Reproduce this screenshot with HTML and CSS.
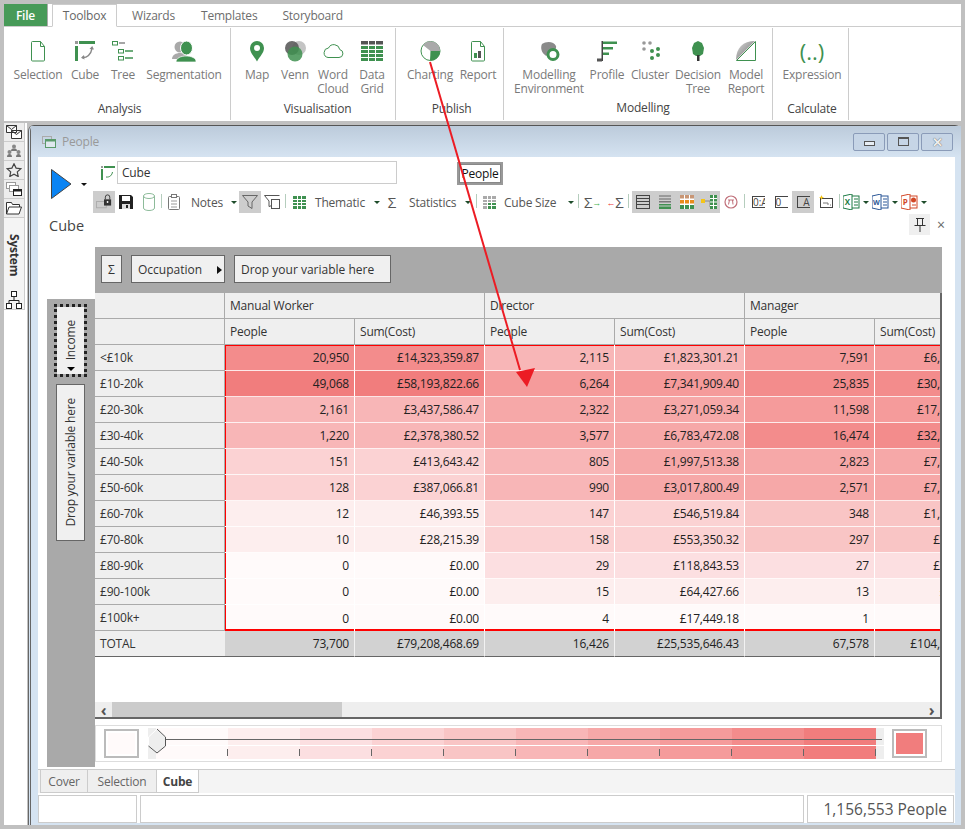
FILE: index.html
```html
<!DOCTYPE html>
<html lang="en">
<head>
<meta charset="utf-8">
<title>People - Cube</title>
<link rel="stylesheet" href="styles.css">
</head>
<body>
<div class="app">
  <header class="ribbon">
    <nav class="rtabs">
      <span class="rtab file">File</span>
      <span class="rtab active">Toolbox</span>
      <span class="rtab t-wiz">Wizards</span>
      <span class="rtab t-tem">Templates</span>
      <span class="rtab t-sto">Storyboard</span>
    </nav>
    <div class="groups">
      <section class="group g1">
        <div class="btns">
          <div class="rb w58"><svg viewBox="0 0 24 24" class="ri"><path d="M5.5 3.5q0-1 1-1h8l4 5v13.500q0 1-1 1h-11q-1 0-1-1z" class="sg"/><path d="M14.500 2.500v5h4" class="sg"/></svg><span>Selection</span></div>
          <div class="rb w36"><svg viewBox="0 0 24 24" class="ri"><rect x="2" y="2" width="3" height="3" fill="#999"/><rect x="6" y="2" width="16" height="3" class="fg"/><rect x="2" y="7" width="3" height="15" class="fg"/><path d="M9 18.500c5 .5 9-3 10-9" class="sm"/><path d="M16.500 10l2.700-3 1.800 3.500zM11 16l-3 2.700 3.500 1.800z" fill="#888"/></svg><span>Cube</span></div>
          <div class="rb w40"><svg viewBox="0 0 24 24" class="ri"><rect x="1.500" y="2.500" width="5" height="3.500" class="sg"/><path d="M8 4h6" class="sm"/><rect x="7.500" y="10.500" width="5" height="3.500" class="sg"/><path d="M14 12h8M14 19h8" class="sg2"/><rect x="7.500" y="17.500" width="5" height="3.500" class="sg"/></svg><span>Tree</span></div>
          <div class="rb w82"><svg viewBox="0 0 24 24" class="ri"><circle cx="8" cy="8" r="5.500" fill="#a9a9a9"/><path d="M0 20c0-4 4-6 8-6s6 1 7 3l-6 3z" fill="#a9a9a9"/><ellipse cx="14.500" cy="9" rx="6" ry="7" fill="#3f9150" stroke="#fff"/><path d="M4 23c0-4 5-6 10-6s10 2 10 5v1z" fill="#3f9150" stroke="#fff" stroke-width=".7"/></svg><span>Segmentation</span></div>
        </div>
        <h3>Analysis</h3>
      </section>
      <section class="group g2">
        <div class="btns">
          <div class="rb w34"><svg viewBox="0 0 24 24" class="ri"><path d="M12 22.500C9 17 5 14 5 9a7 7 0 0 1 14 0c0 5-4 8-7 13.500z" class="fg"/><circle cx="12" cy="9" r="3" fill="#fff"/></svg><span>Map</span></div>
          <div class="rb w42"><svg viewBox="0 0 24 24" class="ri"><circle cx="16" cy="9" r="7" fill="#c4c4c4"/><circle cx="9" cy="9" r="7" fill="#5c5c5c" opacity=".9"/><circle cx="12" cy="15" r="7.500" fill="#3f9150" opacity=".85"/></svg><span>Venn</span></div>
          <div class="rb w34"><svg viewBox="0 0 24 24" class="ri"><path d="M7 18.500h11a4 4 0 0 0 .8-7.900 6 6 0 0 0-11.300-1.600A4.800 4.800 0 0 0 7 18.500z" class="sg"/></svg><span>Word<br>Cloud</span></div>
          <div class="rb w44"><svg viewBox="0 0 24 24" class="ri"><rect x="1" y="2" width="22" height="3.500" fill="#555"/><rect x="1" y="7" width="22" height="15" class="fg"/><path d="M8.500 2v20M15.500 2v20M1 10.500h22M1 14.500h22M1 18.500h22" stroke="#fff" fill="none"/></svg><span>Data<br>Grid</span></div>
        </div>
        <h3>Visualisation</h3>
      </section>
      <section class="group g3">
        <div class="btns">
          <div class="rb w60"><svg viewBox="0 0 24 24" class="ri"><circle cx="12.500" cy="12" r="9.500" fill="#fff" stroke="#3f9150"/><path d="M12.500 12L5 6a9.500 9.500 0 0 1 17 6z" fill="#aaa"/><path d="M12.500 12h9.500a9.500 9.500 0 0 1-10 9.500z" class="fg"/></svg><span>Charting</span></div>
          <div class="rb w36"><svg viewBox="0 0 24 24" class="ri"><path d="M5.500 3.500q0-1 1-1h8l4 5v13.500q0 1-1 1h-11q-1 0-1-1z" class="sg"/><path d="M14.500 2.500v5h4" class="sg"/><rect x="8" y="14" width="3" height="5" class="fg"/><rect x="12" y="12" width="3" height="7" fill="#555"/></svg><span>Report</span></div>
        </div>
        <h3>Publish</h3>
      </section>
      <section class="group g4">
        <div class="btns">
          <div class="rb w70"><svg viewBox="0 0 24 24" class="ri"><path d="M5 5c4-3 12-3 14 2 1 3-3 6-6 7-2 2-3 4-5 2-3-2-5-7-3-11z" fill="#8a8a8a"/><circle cx="16" cy="15.500" r="5" fill="#fff" stroke="#3f9150" stroke-width="3"/></svg><span>Modelling<br>Environment</span></div>
          <div class="rb w46"><svg viewBox="0 0 24 24" class="ri"><rect x="6.500" y="2" width="1.500" height="20" fill="#444"/><rect x="2" y="19.500" width="5" height="3" fill="#555"/><rect x="8" y="2.500" width="14" height="2.500" class="fg"/><rect x="8" y="8" width="10" height="2.500" class="fg"/><rect x="8" y="13.500" width="6" height="2.500" class="fg"/></svg><span>Profile</span></div>
          <div class="rb w40"><svg viewBox="0 0 24 24" class="ri"><circle cx="6" cy="4" r="1.800" fill="#999"/><circle cx="12" cy="4" r="1.800" fill="#999"/><circle cx="6" cy="10" r="1.800" fill="#999"/><circle cx="14" cy="12" r="2" class="fg"/><circle cx="20" cy="10" r="2" class="fg"/><circle cx="20" cy="16" r="2" class="fg"/><circle cx="14" cy="19" r="2" class="fg"/></svg><span>Cluster</span></div>
          <div class="rb w56"><svg viewBox="0 0 24 24" class="ri"><path d="M12 2l4 2 2 5-1 6-3 2h-4l-3-2-1-6 2-5z" class="fg"/><rect x="11" y="16" width="2.500" height="6" fill="#333"/></svg><span>Decision<br>Tree</span></div>
          <div class="rb w40"><svg viewBox="0 0 24 24" class="ri"><defs><linearGradient id="mg" x1="0" y1="0" x2="1" y2="1"><stop offset="0" stop-color="#ddd"/><stop offset="1" stop-color="#666"/></linearGradient></defs><path d="M2 21C2 9 9 2 21 2z" fill="url(#mg)"/><path d="M2.500 21.500L21.500 2.500v19z" class="sg"/></svg><span>Model<br>Report</span></div>
        </div>
        <h3>Calculate-m</h3>
      </section>
      <section class="group g5">
        <div class="btns">
          <div class="rb w72"><span class="expr">(..)</span><span>Expression</span></div>
        </div>
        <h3>Calculate</h3>
      </section>
    </div>
  </header>

  <main class="main">
    <aside class="side">
      <div class="side-panel">
        <div class="si"><svg viewBox="0 0 16 14" class="sic"><path d="M.5.5h10v7h-10zM.5.500l5 4 5-4M5.500 5.500h10v8h-10zM5.500 5.500l5 4 5-4" fill="#fff" stroke="#333"/></svg></div>
        <div class="si"><svg viewBox="0 0 16 14" class="sic"><circle cx="8" cy="2.500" r="2" fill="#888"/><circle cx="3.500" cy="8" r="2" fill="#888"/><circle cx="12.500" cy="8" r="2" fill="#888"/><path d="M1 13c0-2 1-3 2.500-3S6 11 6 13zM10 13c0-2 1-3 2.500-3s2.500 1 2.500 3zM5 7c0-2 1-2.500 3-2.500S11 5 11 7z" fill="#777"/></svg></div>
        <div class="si"><svg viewBox="0 0 16 14" class="sic"><path d="M8 .8l2.100 4.300 4.700.6-3.500 3.200.9 4.600L8 11.200l-4.200 2.300.9-4.600L1.200 5.700l4.700-.6z" fill="none" stroke="#444" stroke-width="1.200"/></svg></div>
        <div class="si"><svg viewBox="0 0 16 14" class="sic"><rect x=".5" y=".5" width="9" height="6" fill="#fff" stroke="#999"/><rect x="3.500" y="3.500" width="9" height="6" fill="#fff" stroke="#999"/><rect x="7.500" y="7.500" width="8" height="6" fill="#fff" stroke="#222"/><rect x="7.500" y="7.500" width="8" height="2" fill="#222"/></svg></div>
        <div class="si last"><svg viewBox="0 0 16 14" class="sic"><path d="M.5 13V1.500h5l1 2h7V6M.5 13L3 6h12.500L13 13z" fill="#fff" stroke="#333"/></svg></div>
        <div class="sys">System</div>
        <svg viewBox="0 0 16 18" class="net"><rect x="5.500" y=".5" width="5" height="5" fill="#fff" stroke="#222"/><rect x=".5" y="12.500" width="5" height="5" fill="#fff" stroke="#222"/><rect x="10.500" y="12.500" width="5" height="5" fill="#fff" stroke="#222"/><path d="M8 6v3.500M3 12.500v-3h10v3" fill="none" stroke="#222"/></svg>
      </div>
    </aside>

    <div class="window">
      <div class="titlebar">
        <svg viewBox="0 0 14 12" class="ticon"><rect x=".5" y=".5" width="9" height="7" fill="none" stroke="#aaa"/><rect x="3.500" y="3.500" width="10" height="8" fill="#dfe8ee" stroke="#5a9a6a"/><rect x="3.500" y="3.500" width="10" height="2" fill="#5a9a6a"/></svg>
        <span class="ttext">People</span>
        <div class="wbtns">
          <span class="wb"><i class="wmin"></i></span>
          <span class="wb"><i class="wmax"></i></span>
          <span class="wb wx">✕</span>
        </div>
      </div>

      <div class="content">
        <div class="head">
          <div class="runcol">
            <div class="runrow">
              <svg viewBox="0 0 21 30" class="play"><path d="M.5.500L20 15 .5 29.500z" fill="#0b84f3" stroke="#444"/></svg>
              <i class="caret dark"></i>
            </div>
            <div class="cube-label">Cube</div>
          </div>
          <div class="headmain">
            <div class="namerow">
              <svg viewBox="0 0 14 14" class="nameicon"><rect x="0" y="0" width="2" height="2" fill="#999"/><rect x="3" y="0" width="11" height="2" class="fg"/><rect x="0" y="3" width="2" height="11" class="fg"/><path d="M5 11c4 .5 6-2 6.500-5" fill="none" stroke="#3f9150"/></svg>
              <div class="nameinput">Cube</div>
            </div>
            <div class="toolbar">
              <span class="ti w22 on"><svg viewBox="0 0 18 18" class="i16"><rect x=".5" y="8.500" width="11" height="7" fill="none" stroke="#aaa"/><rect x="9" y="6" width="8" height="7" fill="#333"/><path d="M10.500 6V3.500a2.500 2.500 0 0 1 5 0V6" fill="none" stroke="#333"/><circle cx="13" cy="9" r="1" fill="#fff"/></svg></span>
              <span class="ti w22"><svg viewBox="0 0 16 16" class="i16"><path d="M1 1h12l2 2v12H1z" fill="#222"/><rect x="4" y="2" width="8" height="5" fill="#fff"/><rect x="4" y="10" width="8" height="5" fill="#ddd"/><rect x="8" y="11" width="2" height="3" fill="#222"/></svg></span>
              <span class="ti w24"><svg viewBox="0 0 12 18" class="i1218"><path d="M.5 3v12c0 1.500 2.500 2.500 5.500 2.500s5.500-1 5.500-2.500V3C11.500 1.500 9 .5 6 .5S.5 1.500.5 3zM.5 3c0 1.500 2.500 2.500 5.500 2.500S11.500 4.500 11.500 3" fill="none" stroke="#8dbb9a"/></svg></span>
              <i class="sep"></i>
              <span class="ti w24"><svg viewBox="0 0 12 16" class="i1216"><rect x=".5" y="2.500" width="11" height="13" rx="1" fill="none" stroke="#777"/><rect x="3.500" y=".5" width="5" height="3" fill="#fff" stroke="#777"/><path d="M3 7h6M3 10h6M3 13h6" stroke="#999"/></svg></span>
              <span class="tt w43">Notes</span><span class="cw"><i class="caret"></i></span>
              <span class="ti w22 on"><svg viewBox="0 0 16 14" class="i16"><path d="M.5.500h15L10 7v6.500L6 11V7z" fill="none" stroke="#666"/></svg></span>
              <span class="ti w22"><svg viewBox="0 0 16 14" class="i16"><path d="M.5.500h15M.5.500L5 6v5.500l3-1" fill="none" stroke="#555"/><rect x="7.500" y="4.500" width="8" height="9" fill="#fff" stroke="#555"/></svg></span>
              <i class="sep s5"></i>
              <span class="ti w22"><svg viewBox="0 0 13 13" class="i13"><rect width="13" height="13" class="fg"/><path d="M4.500 0v13M8.500 0v13M0 3.500h13M0 6.500h13M0 9.500h13" stroke="#fff" fill="none"/></svg></span>
              <span class="tt w62">Thematic</span><span class="cw"><i class="caret"></i></span>
              <span class="ti w20 sig">Σ</span>
              <span class="tt w61 pl7">Statistics</span><span class="cw"><i class="caret"></i></span>
              <i class="sep s6"></i>
              <span class="ti w20"><svg viewBox="0 0 13 13" class="i13"><rect width="13" height="13" fill="#aaa"/><rect x="4.500" y="7" width="8.500" height="6" class="fg"/><path d="M4.500 0v13M8.500 0v13M0 3.500h13M0 6.500h13M0 9.500h13" stroke="#fff" fill="none"/></svg></span>
              <span class="tt w67">Cube Size</span><span class="cw"><i class="caret"></i></span>
              <i class="sep s5"></i>
              <span class="ti w23 sigp">Σ<i class="mini g">→</i></span>
              <span class="ti w22 sigp"><i class="mini r">←</i>Σ</span>
              <i class="sep s5"></i>
              <span class="ti w22 on ml1"><svg viewBox="0 0 14 14" class="i14"><rect x=".5" y=".5" width="13" height="13" fill="none" stroke="#444"/><path d="M0 3.500h14M0 6.500h14M0 9.500h14" stroke="#444"/></svg></span>
              <span class="ti w22 on"><svg viewBox="0 0 14 14" class="i14"><path d="M1 1h12M1 4h12" stroke="#666" fill="none"/><rect x="1" y="6" width="12" height="1.500" fill="#777"/><rect x="1" y="9" width="12" height="1.500" class="fg"/><rect x="1" y="11.500" width="12" height="2.500" class="fg"/></svg></span>
              <span class="ti w22 on"><svg viewBox="0 0 14 14" class="i14"><rect width="14" height="14" fill="#fff"/><rect y="0" width="14" height="3.500" fill="#b06a3a" opacity=".7"/><rect y="5" width="14" height="3.500" fill="#e88c1c"/><rect y="10" width="14" height="4" class="fg"/><path d="M4.500 0v14M9.500 0v14" stroke="#fff"/></svg></span>
              <span class="ti w22 on"><svg viewBox="0 0 16 14" class="i16"><rect x="0" y="4" width="4" height="4" fill="#f5c518"/><path d="M4 6h5v6" stroke="#888" fill="none"/><rect x="9" y="0" width="7" height="14" class="fg"/><path d="M12.500 0v14M9 3.500h7M9 7h7M9 10.500h7" stroke="#fff"/></svg></span>
              <span class="ti w22"><svg viewBox="0 0 14 14" class="i14"><circle cx="7" cy="7" r="6" fill="#fff" stroke="#c0707a" stroke-width="1.200"/><path d="M4 5h6M5.500 5l-1 4.500M8.500 5l.5 4.500" stroke="#c0707a" fill="none"/></svg></span>
              <i class="sep s5"></i>
              <span class="ti w23"><span class="fmt">0:A</span></span>
              <span class="ti w22"><span class="fmt f2">0</span></span>
              <span class="ti w22 on"><span class="fmt f3">A</span></span>
              <span class="ti w24"><svg viewBox="0 0 14 14" class="i14"><rect x="1.500" y="3.500" width="12" height="9" fill="#fff" stroke="#444"/><path d="M4 8h5M9 8v2M11 10h1" stroke="#777"/><path d="M2.500 0l.7 1.800 1.800.7-1.800.7-.7 1.800-.7-1.800L0 2.500l1.800-.7z" fill="#f5c518"/></svg></span>
              <i class="sep s3"></i>
              <span class="ti w21"><svg viewBox="0 0 17 16" class="i17"><rect x="7" y="2" width="9" height="12" fill="#fff" stroke="#1e7b45"/><path d="M11 5h4M11 8h4M11 11h4" stroke="#1e7b45"/><path d="M0 2l9-2v16l-9-2z" fill="#fff" stroke="#1e7b45"/><text x="1.800" y="11" class="ox xl">X</text></svg></span>
              <span class="cw c8"><i class="caret"></i></span>
              <span class="ti w21"><svg viewBox="0 0 17 16" class="i17"><rect x="7" y="2" width="9" height="12" fill="#fff" stroke="#2b5797"/><path d="M11 5h4M11 8h4M11 11h4" stroke="#2b5797"/><path d="M0 2l9-2v16l-9-2z" fill="#fff" stroke="#2b5797"/><text x="1" y="11" class="ox wd">W</text></svg></span>
              <span class="cw c8"><i class="caret"></i></span>
              <span class="ti w21"><svg viewBox="0 0 17 16" class="i17"><rect x="7" y="2" width="9" height="12" fill="#fff" stroke="#d24726"/><circle cx="12.500" cy="6" r="2.500" fill="#d24726"/><path d="M11 11h4" stroke="#d24726"/><path d="M0 2l9-2v16l-9-2z" fill="#fff" stroke="#d24726"/><text x="1.800" y="11" class="ox pp">P</text></svg></span>
              <span class="cw c8"><i class="caret"></i></span>
            </div>
            <div class="pinrow">
              <span class="pin"><svg viewBox="0 0 12 14" class="i1214"><path d="M2 .5h8M3.500.5v6.500M8.500.5v6.500M.5 7.500h11M6 7.500V14" fill="none" stroke="#333"/></svg></span>
              <span class="closex">×</span>
            </div>
          </div>
        </div>

        <div class="cubearea">
          <div class="rowshelf">
            <div class="vbtn income"><span>Income</span><i class="caret black"></i></div>
            <div class="vbtn dropv"><span>Drop your variable here</span></div>
          </div>
          <div class="cubemain">
            <div class="colshelf">
              <span class="hbtn sigbtn">Σ</span>
              <span class="hbtn occ">Occupation<i class="tri"></i></span>
              <span class="hbtn drop">Drop your variable here</span>
            </div>
            <div class="gridbox">
              <div class="gridclip">
                <table class="cube">
                  <colgroup><col class="c130"><col class="c130"><col class="c130"><col class="c130"><col class="c130"><col class="c130"><col class="c130"></colgroup>
                  <thead>
                    <tr><th></th><th colspan="2">Manual Worker</th><th colspan="2">Director</th><th colspan="2">Manager</th></tr>
                    <tr><th></th><th>People</th><th>Sum(Cost)</th><th>People</th><th>Sum(Cost)</th><th>People</th><th>Sum(Cost)</th></tr>
                  </thead>
                  <tbody>
                    <tr><th>&lt;£10k</th><td class="h8">20,950</td><td class="h8">£14,323,359.87</td><td class="h5">2,115</td><td class="h5">£1,823,301.21</td><td class="h7">7,591</td><td class="h7">£6,634,218.52</td></tr>
                    <tr><th>£10-20k</th><td class="h9">49,068</td><td class="h9">£58,193,822.66</td><td class="h7">6,264</td><td class="h7">£7,341,909.40</td><td class="h8">25,835</td><td class="h8">£30,172,446.18</td></tr>
                    <tr><th>£20-30k</th><td class="h5">2,161</td><td class="h5">£3,437,586.47</td><td class="h6">2,322</td><td class="h6">£3,271,059.34</td><td class="h7">11,598</td><td class="h7">£17,418,902.35</td></tr>
                    <tr><th>£30-40k</th><td class="h5">1,220</td><td class="h5">£2,378,380.52</td><td class="h6">3,577</td><td class="h6">£6,783,472.08</td><td class="h8">16,474</td><td class="h8">£32,316,570.94</td></tr>
                    <tr><th>£40-50k</th><td class="h3">151</td><td class="h3">£413,643.42</td><td class="h5">805</td><td class="h6">£1,997,513.38</td><td class="h6">2,823</td><td class="h6">£7,452,118.27</td></tr>
                    <tr><th>£50-60k</th><td class="h3">128</td><td class="h3">£387,066.81</td><td class="h5">990</td><td class="h6">£3,017,800.49</td><td class="h6">2,571</td><td class="h6">£7,938,640.11</td></tr>
                    <tr><th>£60-70k</th><td class="h1">12</td><td class="h1">£46,393.55</td><td class="h3">147</td><td class="h3">£546,519.84</td><td class="h4">348</td><td class="h4">£1,172,805.63</td></tr>
                    <tr><th>£70-80k</th><td class="h1">10</td><td class="h1">£28,215.39</td><td class="h3">158</td><td class="h3">£553,350.32</td><td class="h4">297</td><td class="h4">£947,221.06</td></tr>
                    <tr><th>£80-90k</th><td class="h0">0</td><td class="h0">£0.00</td><td class="h2">29</td><td class="h2">£118,843.53</td><td class="h2">27</td><td class="h2">£106,372.90</td></tr>
                    <tr><th>£90-100k</th><td class="h0">0</td><td class="h0">£0.00</td><td class="h1">15</td><td class="h1">£64,427.66</td><td class="h1">13</td><td class="h1">£52,610.74</td></tr>
                    <tr><th>£100k+</th><td class="h0">0</td><td class="h0">£0.00</td><td class="h0">4</td><td class="h0">£17,449.18</td><td class="h0">1</td><td class="h0">£3,284.00</td></tr>
                  </tbody>
                  <tfoot>
                    <tr><th>TOTAL</th><td>73,700</td><td>£79,208,468.69</td><td>16,426</td><td>£25,535,646.43</td><td>67,578</td><td>£104,172,836.51</td></tr>
                  </tfoot>
                </table>
              </div>
              <div class="hscroll">
                <span class="sarrow">‹</span>
                <span class="thumb"></span>
                <span class="sarrow right">›</span>
              </div>
            </div>
            <div class="legend">
              <span class="swatch"><i class="h0"></i></span>
              <div class="track">
                <span class="seg h0"></span><span class="seg h1"></span><span class="seg h2"></span><span class="seg h3"></span><span class="seg h4"></span><span class="seg h5"></span><span class="seg h6"></span><span class="seg h7"></span><span class="seg h8"></span><span class="seg h9"></span>
                <i class="band"></i>
                <i class="sline"></i>
                <svg viewBox="0 0 18 26" class="handle"><path d="M.5 9L9 1l8.500 8v9L9 25 .5 18z" fill="#eee" stroke="#fff"/><path d="M9 1l8.500 8v9L9 25M.5 18L9 25" fill="none" stroke="#555"/></svg>
              </div>
              <span class="swatch end"><i class="h9"></i></span>
            </div>
          </div>
        </div>

        <div class="sheettabs">
          <span class="stab s-cover">Cover</span>
          <span class="stab s-sel">Selection</span>
          <span class="stab s-cube">Cube</span>
        </div>
        <div class="status">
          <span class="st st1"></span>
          <span class="st st2"></span>
          <span class="st st3">1,156,553 People</span>
        </div>
      </div>
    </div>
  </main>

  <div class="tip">People</div>
  <svg class="arrow" viewBox="0 0 965 829"><path d="M430 62L520 370" stroke="#ec1c24" stroke-width="2" fill="none"/><path d="M516 372L535 368 527 387z" fill="#ec1c24"/></svg>
</div>
</body>
</html>
```

FILE: styles.css
```css
* { box-sizing: border-box; }
html, body { margin: 0; padding: 0; }
body { width: 965px; height: 829px; overflow: hidden; font-family: "Open Sans", "Noto Sans", sans-serif; font-size: 12px; letter-spacing: -0.2px; color: #222; }
i { font-style: normal; }

.app { position: relative; width: 965px; height: 829px; background: #c0c0c0; padding: 4px; display: flex; flex-direction: column; }

/* ribbon */
.ribbon { height: 117px; background: #fff; flex: none; }
.rtabs { height: 23px; display: flex; align-items: stretch; border-bottom: 1px solid #ccc; }
.rtab { display: flex; align-items: center; color: #6d6d6d; }
.file { width: 44px; justify-content: center; background: #479a58; color: #fff; font-weight: 600; border-right: 1px solid #aaa; }
.active { width: 65px; margin-left: 4px; justify-content: center; border: 1px solid #ccc; border-bottom: 1px solid #fff; height: 23px; color: #666; }
.t-wiz { margin-left: 15px; }
.t-tem { margin-left: 26px; }
.t-sto { margin-left: 25px; }

.groups { display: flex; height: 92px; padding-top: 1px; }
.group { border-right: 1px solid #ccc; display: flex; flex-direction: column; height: 92px; }
.g1 { width: 227px; padding-left: 5px; margin-left: 0; }
.g2 { width: 165px; padding-left: 9px; }
.g3 { width: 108px; padding-left: 4px; }
.g4 { width: 269px; padding-left: 10px; }
.g5 { width: 76px; padding-left: 3px; }
.btns { display: flex; height: 73px; }
.rb { display: flex; flex-direction: column; align-items: center; text-align: center; color: #7a7a7a; line-height: 14px; padding-top: 11px; flex: none; white-space: nowrap; }
.ri { width: 24px; height: 24px; margin-bottom: 5px; display: block; flex: none; }
.group h3 { margin: 0; font-size: 12px; font-weight: 400; color: #444; text-align: center; line-height: 16px; }
.g4 h3 { font-size: 0; }
.g4 h3::after { content: "Modelling"; font-size: 12px; }
.w21 { width: 21px; } .w20 { width: 20px; } .w22 { width: 22px; } .w23 { width: 23px; } .w24 { width: 24px; }
.w34 { width: 34px; } .w36 { width: 36px; } .w40 { width: 40px; } .w42 { width: 42px; } .w43 { width: 43px; } .w44 { width: 44px; } .w46 { width: 46px; }
.w56 { width: 56px; } .w58 { width: 58px; } .w60 { width: 60px; } .w61 { width: 61px; } .w62 { width: 62px; } .w67 { width: 67px; } .w70 { width: 70px; } .w72 { width: 72px; } .w82 { width: 82px; }
.sg { fill: none; stroke: #3f9150; stroke-width: 1; }
.sg2 { fill: none; stroke: #3f9150; stroke-width: 1.5; }
.sm { fill: none; stroke: #888; stroke-width: 1.5; }
.fg { fill: #3f9150; }
.expr { font-size: 22px; line-height: 24px; height: 24px; margin-bottom: 5px; color: #3f9150; letter-spacing: 0; }

/* main */
.main { flex: 1; display: flex; margin-top: 2px; min-height: 0; }
.side { width: 23px; margin-right: 1px; background: #fff; flex: none; }
.side-panel { width: 21px; height: 187px; border-right: 1px solid #ccc; border-bottom: 1px solid #ccc; background: #f4f4f4; }
.si { height: 19px; border-bottom: 1px solid #ccc; background: #ededed; display: flex; align-items: center; justify-content: center; }
.sic { width: 16px; height: 14px; display: block; }
.sys { writing-mode: vertical-rl; font-weight: 700; height: 73px; padding-top: 16px; width: 20px; display: flex; align-items: center; color: #333; }
.net { width: 16px; height: 18px; display: block; margin-left: 2px; }

.window { flex: 1; margin-top: 2px; background: #d5e3f1; border-top: 1px solid #555; border-left: 3px double #666; border-radius: 6px 6px 0 0; padding: 0 6px 2px 7px; display: flex; flex-direction: column; min-width: 0; }
.titlebar { height: 31px; margin: 0 -6px 0 -7px; padding: 0 8px 0 11px; display: flex; align-items: center; background: linear-gradient(#bccbdb, #d5e3f1); flex: none; }
.ticon { width: 14px; height: 12px; margin-right: 6px; }
.ttext { color: #999; }
.wbtns { margin-left: auto; display: flex; gap: 2px; }
.wb { width: 32px; height: 18px; border: 1px solid #8a9bb8; border-radius: 2px; background: #c6d5e6; display: flex; align-items: center; justify-content: center; color: #555; font-size: 13px; }
.wmin { width: 11px; height: 5px; border: 1px solid #555; background: #e8eef5; margin-top: 3px; }
.wmax { width: 11px; height: 9px; border: 1px solid #555; border-top-width: 2px; }
.wx { color: #eee; text-shadow: 0 0 1px #333; font-weight: 700; }

.content { flex: 1; background: #fff; display: flex; flex-direction: column; min-height: 0; }
.head { height: 90px; display: flex; flex: none; }
.runcol { width: 55px; padding: 12px 0 0 13px; flex: none; }
.runrow { display: flex; align-items: center; height: 30px; }
.play { width: 21px; height: 30px; display: block; }
.caret { display: block; width: 0; height: 0; border: 3px solid transparent; border-top: 3px solid #1e4d2b; border-bottom: 0; }
.caret.dark { border-top-color: #111; margin-left: 9px; }
.cube-label { font-size: 14.5px; margin: 17px 0 0 -2px; color: #444; letter-spacing: 0; line-height: 20px; }
.headmain { flex: 1; min-width: 0; }
.namerow { display: flex; align-items: center; height: 23px; margin-top: 4px; padding-left: 8px; }
.nameicon { width: 14px; height: 14px; margin-right: 2px; }
.nameinput { width: 280px; height: 23px; border: 1px solid #ccc; padding-left: 4px; line-height: 21px; color: #333; }
.toolbar { display: flex; align-items: stretch; height: 22px; margin-top: 7px; }
.ti { display: flex; align-items: center; justify-content: center; flex: none; height: 22px; }
.on { background: #cdcdcd; }
.ml1 { margin-left: 1px; }
.tt { display: flex; align-items: center; padding-left: 5px; color: #555; flex: none; }
.pl7 { padding-left: 7px; }
.cw { width: 10px; display: flex; align-items: center; justify-content: center; flex: none; }
.c8 { width: 8px; }
.sep { width: 1px; flex: none; position: relative; }
.sep::after { content: ""; display: block; width: 1px; height: 14px; margin: 3px auto 0; background: #b5cdbd; }
.s5 { width: 5px; } .s6 { width: 6px; } .s3 { width: 3px; }
.i16 { width: 16px; height: 16px; } .i13 { width: 13px; height: 13px; } .i14 { width: 14px; height: 14px; } .i17 { width: 17px; height: 16px; }
.i1218 { width: 12px; height: 18px; } .i1216 { width: 12px; height: 16px; } .i1214 { width: 12px; height: 14px; }
.sig, .sigp { font-size: 15px; color: #555; }
.mini { font-size: 9px; font-weight: 700; line-height: 9px; }
.mini.g { color: #3fb24f; }
.mini.r { color: #e33; }
.fmt { display: block; width: 13px; height: 12px; border: 1px solid #444; border-right: 0; font-size: 10px; line-height: 10px; color: #444; letter-spacing: 0; white-space: nowrap; overflow: hidden; }
.f3 { text-align: right; }
.ox { font-size: 8px; font-weight: 700; font-family: "Open Sans", sans-serif; letter-spacing: 0; }
.xl { fill: #1e7b45; } .wd { fill: #2b5797; font-size: 7px; } .pp { fill: #d24726; }
.pinrow { display: flex; align-items: center; height: 21px; margin-top: 1px; padding-left: 816px; }
.pin { width: 21px; height: 21px; background: #efefef; display: flex; align-items: center; justify-content: center; }
.closex { margin-left: 6px; width: 10px; text-align: center; font-size: 14px; color: #666; }

/* cube */
.cubearea { display: grid; grid-template-columns: 48px 847px; height: 520px; padding-left: 0; margin-left: 9px; flex: none; }
.rowshelf { margin-top: 52px; background: #a9a9a9; padding: 5px 0 0 7px; }
.vbtn { background: #f0f0f0; border: 1px solid #666; display: flex; flex-direction: column; align-items: center; justify-content: center; color: #333; }
.vbtn span { writing-mode: vertical-rl; transform: rotate(180deg); }
.income { width: 33px; height: 73px; border: 3px dotted #222; background-clip: padding-box; justify-content: flex-end; padding-bottom: 3px; }
.income .caret { margin-top: 7px; border-width: 4px; border-top-width: 4px; border-bottom: 0; border-top-color: #000; }
.dropv { width: 29px; height: 157px; margin: 7px 0 0 2px; }
.cubemain { display: flex; flex-direction: column; min-width: 0; }
.colshelf { height: 46px; flex: none; background: #a9a9a9; display: flex; align-items: center; padding: 0 0 2px 6px; }
.hbtn { height: 28px; display: flex; align-items: center; background: #f0f0f0; border: 1px solid #666; color: #333; padding-left: 6px; flex: none; letter-spacing: 0; }
.sigbtn { width: 21px; padding: 0; justify-content: center; }
.occ { width: 94px; margin-left: 9px; position: relative; }
.tri { position: absolute; right: 2px; top: 10px; border: 4px solid transparent; border-left: 5px solid #111; border-right: 0; }
.drop { width: 157px; margin-left: 9px; }
.gridbox { height: 426px; flex: none; border-right: 2px solid #666; border-bottom: 2px solid #666; display: flex; flex-direction: column; }
.gridclip { height: 409px; overflow: hidden; flex: none; }
.cube { width: 910px; table-layout: fixed; border-collapse: separate; border-spacing: 0; }
.c130 { width: 130px; }
.cube th, .cube td { height: 26px; padding: 0 5px; font-weight: 400; white-space: nowrap; overflow: hidden; }
.cube th { text-align: left; background: #efefef; border-right: 1px solid #aaa; border-bottom: 1px solid #aaa; color: #333; }
.cube td { text-align: right; border-right: 1px solid #fff; border-bottom: 1px solid rgba(255,255,255,.8); color: #222; }
.cube tbody tr:first-child td { box-shadow: inset 0 1px 0 #f00; }
.cube tbody tr:last-child td { box-shadow: inset 0 -2px 0 #f00; border-bottom: 0; }
.cube tbody tr td:nth-child(2) { box-shadow: inset 1px 0 0 #f00; }
.cube tbody tr:first-child td:nth-child(2) { box-shadow: inset 1px 1px 0 #f00; }
.cube tbody tr:last-child td:nth-child(2) { box-shadow: inset 1px -2px 0 #f00; }
.cube tfoot td { background: #d2d2d2; border-bottom: 1px solid #666; border-right: 1px solid #f2f2f2; }
.cube tfoot th { border-bottom: 1px solid #666; border-right: 0; }
.h0 { background: #fffafa; } .h1 { background: #fdeeee; } .h2 { background: #fcdfe1; } .h3 { background: #fbd2d3; } .h4 { background: #f9c5c5; }
.h5 { background: #f8b6b7; } .h6 { background: #f6a8a8; } .h7 { background: #f59b9b; } .h8 { background: #f38c8c; } .h9 { background: #f17d7d; }
.hscroll { height: 15px; margin-top: auto; margin-bottom: 0; background: #eee; display: flex; align-items: center; position: relative; }
.sarrow { width: 17px; text-align: center; font-weight: 700; font-size: 16px; line-height: 14px; color: #555; flex: none; }
.thumb { width: 230px; height: 15px; background: #cbcbcb; flex: none; }
.sarrow.right { margin-left: auto; }
.legend { height: 37px; margin-top: 6px; border: 1px solid #ddd; display: flex; align-items: center; padding-left: 8px; flex: none; }
.swatch { width: 35px; height: 29px; border: 2px solid #bbb; padding: 2px; flex: none; background: #fff; }
.swatch i { display: block; height: 100%; }
.swatch.end { margin-left: 8px; width: 35px; }
.track { position: relative; width: 736px; height: 31px; margin-left: 9px; padding: 0 8px; background: #eee; display: flex; flex: none; }
.seg { width: 72px; height: 31px; position: relative; flex: none; }
.seg::after { content: ""; position: absolute; right: 0; bottom: 3px; width: 1px; height: 7px; background: #666; }
.band { position: absolute; left: 0; right: 0; top: 17px; height: 1px; background: #fff; }
.sline { position: absolute; left: 16px; right: 2px; top: 11px; height: 1px; background: #666; }
.handle { position: absolute; left: 0; top: 0; width: 18px; height: 26px; }

/* tabs, status */
.sheettabs { height: 24px; margin-top: 2px; background: #f4f4f4; border-top: 1px solid #ccc; padding-left: 2px; display: flex; flex: none; }
.stab { display: flex; align-items: center; justify-content: center; height: 23px; background: #efefef; border: 1px solid #ccc; border-top: 0; border-right: 0; color: #666; }
.s-cover { width: 47px; } .s-sel { width: 69px; }
.s-cube { width: 43px; background: #fff; font-weight: 700; color: #444; border-right: 1px solid #ccc; }
.status { display: flex; height: 28px; margin-top: 2px; gap: 3px; flex: none; }
.st { border: 1px solid #ccc; height: 28px; }
.st1 { width: 99px; } .st2 { width: 664px; }
.st3 { width: 147px; font-size: 15.500px; text-align: right; padding-right: 6px; line-height: 26px; color: #555; letter-spacing: 0; white-space: nowrap; }

/* overlays */
.tip { position: absolute; left: 457px; top: 162px; width: 46px; height: 23px; border: 2px solid #999; outline: 1px solid #888; outline-offset: -3px; background: #fff; color: #111; text-align: center; line-height: 19px; }
.arrow { position: absolute; left: 0; top: 0; width: 965px; height: 829px; pointer-events: none; }
```
